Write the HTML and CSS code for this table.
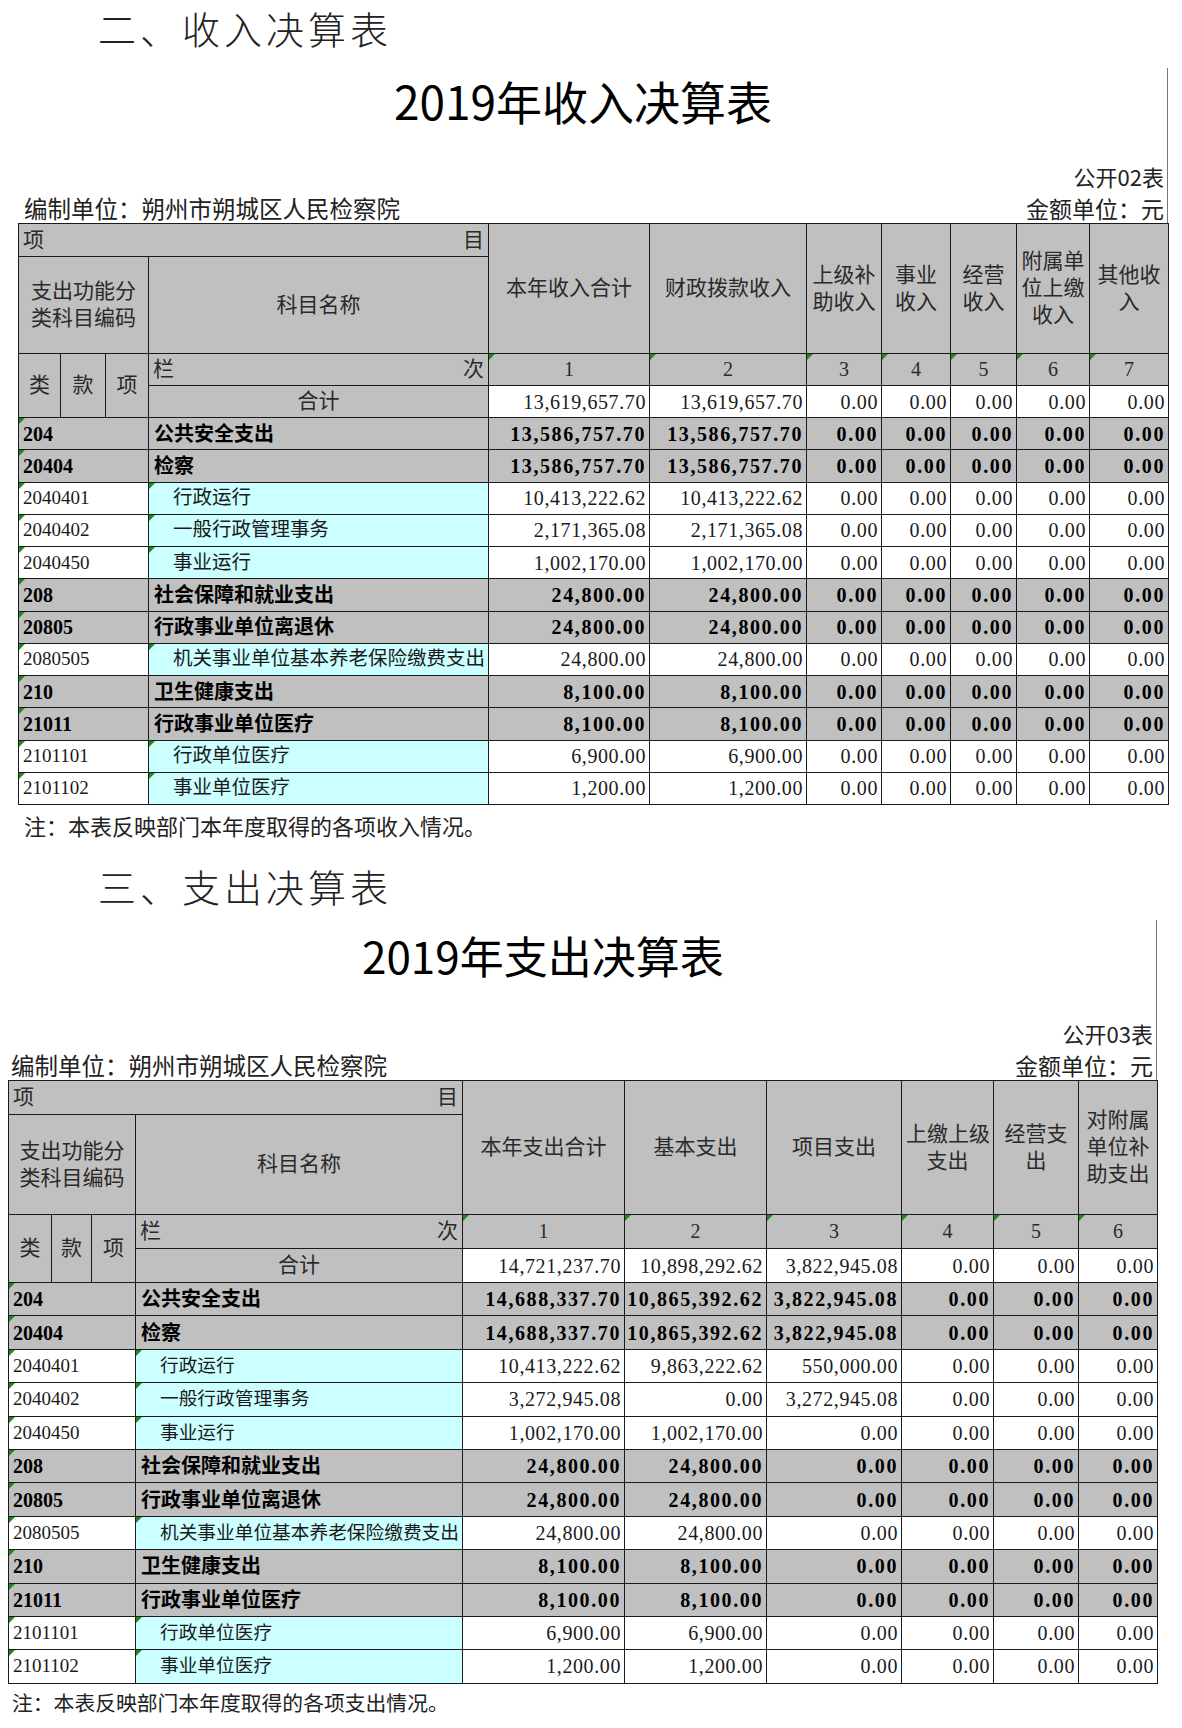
FILE: index.html
```html
<!DOCTYPE html>
<html lang="zh-CN">
<head>
<meta charset="utf-8">
<title>收入决算表 / 支出决算表</title>
<link rel="stylesheet" href="styles.css">
</head>
<body>

<section class="sheet sec-income">
  <h2 class="heading">二、收入决算表</h2>
  <div class="sheet-head">
    <h1 class="title">2019年收入决算表</h1>
    <div class="form-no">公开02表</div>
    <div class="meta"><span>编制单位：朔州市朔城区人民检察院</span><span>金额单位：元</span></div>
  </div>
  <table class="grid">
    <colgroup>
      <col class="w42"><col class="w45"><col class="w43"><col class="w340">
      <col class="w161"><col class="w157"><col class="w75"><col class="w69"><col class="w66"><col class="w73"><col class="w79">
    </colgroup>
    <tr class="r-top">
      <td colspan="4" class="hd lt"><div class="split"><span>项</span><span>目</span></div></td>
      <td rowspan="2" class="hd">本年收入合计</td>
      <td rowspan="2" class="hd">财政拨款收入</td>
      <td rowspan="2" class="hd">上级补<br>助收入</td>
      <td rowspan="2" class="hd">事业<br>收入</td>
      <td rowspan="2" class="hd">经营<br>收入</td>
      <td rowspan="2" class="hd">附属单<br>位上缴<br>收入</td>
      <td rowspan="2" class="hd">其他收<br>入</td>
    </tr>
    <tr class="r-head">
      <td colspan="3" class="hd">支出功能分<br>类科目编码</td>
      <td class="hd">科目名称</td>
    </tr>
    <tr class="r-num">
      <td rowspan="2" class="hd">类</td>
      <td rowspan="2" class="hd">款</td>
      <td rowspan="2" class="hd">项</td>
      <td class="hd lt"><div class="split"><span>栏</span><span>次</span></div></td>
      <td class="hd idx tri">1</td><td class="hd idx tri">2</td><td class="hd idx tri">3</td><td class="hd idx tri">4</td><td class="hd idx tri">5</td><td class="hd idx tri">6</td><td class="hd idx tri">7</td>
    </tr>
    <tr class="r-sum">
      <td class="hd">合计</td>
      <td class="num">13,619,657.70</td><td class="num">13,619,657.70</td><td class="num">0.00</td><td class="num">0.00</td><td class="num">0.00</td><td class="num">0.00</td><td class="num">0.00</td>
    </tr>
    <tr class="row b">
      <td colspan="3" class="code tri">204</td><td class="name">公共安全支出</td>
      <td class="num">13,586,757.70</td><td class="num">13,586,757.70</td><td class="num">0.00</td><td class="num">0.00</td><td class="num">0.00</td><td class="num">0.00</td><td class="num">0.00</td>
    </tr>
    <tr class="row b">
      <td colspan="3" class="code tri">20404</td><td class="name">检察</td>
      <td class="num">13,586,757.70</td><td class="num">13,586,757.70</td><td class="num">0.00</td><td class="num">0.00</td><td class="num">0.00</td><td class="num">0.00</td><td class="num">0.00</td>
    </tr>
    <tr class="row d">
      <td colspan="3" class="code tri">2040401</td><td class="name tri">行政运行</td>
      <td class="num">10,413,222.62</td><td class="num">10,413,222.62</td><td class="num">0.00</td><td class="num">0.00</td><td class="num">0.00</td><td class="num">0.00</td><td class="num">0.00</td>
    </tr>
    <tr class="row d">
      <td colspan="3" class="code tri">2040402</td><td class="name tri">一般行政管理事务</td>
      <td class="num">2,171,365.08</td><td class="num">2,171,365.08</td><td class="num">0.00</td><td class="num">0.00</td><td class="num">0.00</td><td class="num">0.00</td><td class="num">0.00</td>
    </tr>
    <tr class="row d">
      <td colspan="3" class="code tri">2040450</td><td class="name tri">事业运行</td>
      <td class="num">1,002,170.00</td><td class="num">1,002,170.00</td><td class="num">0.00</td><td class="num">0.00</td><td class="num">0.00</td><td class="num">0.00</td><td class="num">0.00</td>
    </tr>
    <tr class="row b">
      <td colspan="3" class="code tri">208</td><td class="name">社会保障和就业支出</td>
      <td class="num">24,800.00</td><td class="num">24,800.00</td><td class="num">0.00</td><td class="num">0.00</td><td class="num">0.00</td><td class="num">0.00</td><td class="num">0.00</td>
    </tr>
    <tr class="row b">
      <td colspan="3" class="code tri">20805</td><td class="name">行政事业单位离退休</td>
      <td class="num">24,800.00</td><td class="num">24,800.00</td><td class="num">0.00</td><td class="num">0.00</td><td class="num">0.00</td><td class="num">0.00</td><td class="num">0.00</td>
    </tr>
    <tr class="row d">
      <td colspan="3" class="code tri">2080505</td><td class="name tri">机关事业单位基本养老保险缴费支出</td>
      <td class="num">24,800.00</td><td class="num">24,800.00</td><td class="num">0.00</td><td class="num">0.00</td><td class="num">0.00</td><td class="num">0.00</td><td class="num">0.00</td>
    </tr>
    <tr class="row b">
      <td colspan="3" class="code tri">210</td><td class="name">卫生健康支出</td>
      <td class="num">8,100.00</td><td class="num">8,100.00</td><td class="num">0.00</td><td class="num">0.00</td><td class="num">0.00</td><td class="num">0.00</td><td class="num">0.00</td>
    </tr>
    <tr class="row b">
      <td colspan="3" class="code tri">21011</td><td class="name">行政事业单位医疗</td>
      <td class="num">8,100.00</td><td class="num">8,100.00</td><td class="num">0.00</td><td class="num">0.00</td><td class="num">0.00</td><td class="num">0.00</td><td class="num">0.00</td>
    </tr>
    <tr class="row d">
      <td colspan="3" class="code tri">2101101</td><td class="name tri">行政单位医疗</td>
      <td class="num">6,900.00</td><td class="num">6,900.00</td><td class="num">0.00</td><td class="num">0.00</td><td class="num">0.00</td><td class="num">0.00</td><td class="num">0.00</td>
    </tr>
    <tr class="row d">
      <td colspan="3" class="code tri">2101102</td><td class="name tri">事业单位医疗</td>
      <td class="num">1,200.00</td><td class="num">1,200.00</td><td class="num">0.00</td><td class="num">0.00</td><td class="num">0.00</td><td class="num">0.00</td><td class="num">0.00</td>
    </tr>
  </table>
  <p class="note">注：本表反映部门本年度取得的各项收入情况。</p>
</section>

<section class="sheet sec-expense">
  <h2 class="heading">三、支出决算表</h2>
  <div class="sheet-head">
    <h1 class="title">2019年支出决算表</h1>
    <div class="form-no">公开03表</div>
    <div class="meta"><span>编制单位：朔州市朔城区人民检察院</span><span>金额单位：元</span></div>
  </div>
  <table class="grid">
    <colgroup>
      <col class="w43"><col class="w40"><col class="w44"><col class="w327">
      <col class="w162"><col class="w142"><col class="w135"><col class="w92"><col class="w85"><col class="w79">
    </colgroup>
    <tr class="r-top">
      <td colspan="4" class="hd lt"><div class="split"><span>项</span><span>目</span></div></td>
      <td rowspan="2" class="hd">本年支出合计</td>
      <td rowspan="2" class="hd">基本支出</td>
      <td rowspan="2" class="hd">项目支出</td>
      <td rowspan="2" class="hd">上缴上级<br>支出</td>
      <td rowspan="2" class="hd">经营支<br>出</td>
      <td rowspan="2" class="hd">对附属<br>单位补<br>助支出</td>
    </tr>
    <tr class="r-head">
      <td colspan="3" class="hd">支出功能分<br>类科目编码</td>
      <td class="hd">科目名称</td>
    </tr>
    <tr class="r-num">
      <td rowspan="2" class="hd">类</td>
      <td rowspan="2" class="hd">款</td>
      <td rowspan="2" class="hd">项</td>
      <td class="hd lt"><div class="split"><span>栏</span><span>次</span></div></td>
      <td class="hd idx tri">1</td><td class="hd idx tri">2</td><td class="hd idx tri">3</td><td class="hd idx tri">4</td><td class="hd idx tri">5</td><td class="hd idx tri">6</td>
    </tr>
    <tr class="r-sum">
      <td class="hd">合计</td>
      <td class="num">14,721,237.70</td><td class="num">10,898,292.62</td><td class="num">3,822,945.08</td><td class="num">0.00</td><td class="num">0.00</td><td class="num">0.00</td>
    </tr>
    <tr class="row b">
      <td colspan="3" class="code tri">204</td><td class="name">公共安全支出</td>
      <td class="num">14,688,337.70</td><td class="num">10,865,392.62</td><td class="num">3,822,945.08</td><td class="num">0.00</td><td class="num">0.00</td><td class="num">0.00</td>
    </tr>
    <tr class="row b">
      <td colspan="3" class="code tri">20404</td><td class="name">检察</td>
      <td class="num">14,688,337.70</td><td class="num">10,865,392.62</td><td class="num">3,822,945.08</td><td class="num">0.00</td><td class="num">0.00</td><td class="num">0.00</td>
    </tr>
    <tr class="row d">
      <td colspan="3" class="code tri">2040401</td><td class="name tri">行政运行</td>
      <td class="num">10,413,222.62</td><td class="num">9,863,222.62</td><td class="num">550,000.00</td><td class="num">0.00</td><td class="num">0.00</td><td class="num">0.00</td>
    </tr>
    <tr class="row d">
      <td colspan="3" class="code tri">2040402</td><td class="name tri">一般行政管理事务</td>
      <td class="num">3,272,945.08</td><td class="num">0.00</td><td class="num">3,272,945.08</td><td class="num">0.00</td><td class="num">0.00</td><td class="num">0.00</td>
    </tr>
    <tr class="row d">
      <td colspan="3" class="code tri">2040450</td><td class="name tri">事业运行</td>
      <td class="num">1,002,170.00</td><td class="num">1,002,170.00</td><td class="num">0.00</td><td class="num">0.00</td><td class="num">0.00</td><td class="num">0.00</td>
    </tr>
    <tr class="row b">
      <td colspan="3" class="code tri">208</td><td class="name">社会保障和就业支出</td>
      <td class="num">24,800.00</td><td class="num">24,800.00</td><td class="num">0.00</td><td class="num">0.00</td><td class="num">0.00</td><td class="num">0.00</td>
    </tr>
    <tr class="row b">
      <td colspan="3" class="code tri">20805</td><td class="name">行政事业单位离退休</td>
      <td class="num">24,800.00</td><td class="num">24,800.00</td><td class="num">0.00</td><td class="num">0.00</td><td class="num">0.00</td><td class="num">0.00</td>
    </tr>
    <tr class="row d">
      <td colspan="3" class="code tri">2080505</td><td class="name tri">机关事业单位基本养老保险缴费支出</td>
      <td class="num">24,800.00</td><td class="num">24,800.00</td><td class="num">0.00</td><td class="num">0.00</td><td class="num">0.00</td><td class="num">0.00</td>
    </tr>
    <tr class="row b">
      <td colspan="3" class="code tri">210</td><td class="name">卫生健康支出</td>
      <td class="num">8,100.00</td><td class="num">8,100.00</td><td class="num">0.00</td><td class="num">0.00</td><td class="num">0.00</td><td class="num">0.00</td>
    </tr>
    <tr class="row b">
      <td colspan="3" class="code tri">21011</td><td class="name">行政事业单位医疗</td>
      <td class="num">8,100.00</td><td class="num">8,100.00</td><td class="num">0.00</td><td class="num">0.00</td><td class="num">0.00</td><td class="num">0.00</td>
    </tr>
    <tr class="row d">
      <td colspan="3" class="code tri">2101101</td><td class="name tri">行政单位医疗</td>
      <td class="num">6,900.00</td><td class="num">6,900.00</td><td class="num">0.00</td><td class="num">0.00</td><td class="num">0.00</td><td class="num">0.00</td>
    </tr>
    <tr class="row d">
      <td colspan="3" class="code tri">2101102</td><td class="name tri">事业单位医疗</td>
      <td class="num">1,200.00</td><td class="num">1,200.00</td><td class="num">0.00</td><td class="num">0.00</td><td class="num">0.00</td><td class="num">0.00</td>
    </tr>
  </table>
  <p class="note">注：本表反映部门本年度取得的各项支出情况。</p>
</section>

</body>
</html>
```

FILE: styles.css
```css
* { box-sizing: border-box; }

body {
  margin: 0;
  width: 1182px;
  background: #fff;
  color: #111;
  font-family: "Noto Sans CJK SC", "Noto Sans", sans-serif;
}

.sec-income { margin-left: 18px; width: 1150px; }
.sec-expense { margin-left: 8px; width: 1149px; }

.heading {
  margin: 0;
  font-size: 38px;
  line-height: 56px;
  font-weight: 300;
  letter-spacing: 4px;
  color: #222;
}
.sec-income .heading { padding-left: 80px; }
.sec-expense .heading { padding-left: 90px; margin-top: 18px; }

.sheet-head { border-right: 1px solid #777; }
.sec-income .sheet-head { margin-top: 12px; padding-top: 4px; }
.sec-expense .sheet-head { margin-top: 6px; padding-top: 7px; }

.title {
  margin: 0;
  font-size: 46px;
  line-height: 56px;
  font-weight: 400;
  color: #000;
}
.sec-income .title { padding-left: 376px; }
.sec-expense .title { padding-left: 354px; font-size: 44px; }

.form-no {
  text-align: right;
  font-size: 22px;
  line-height: 30px;
  padding-right: 3px;
  color: #222;
}
.sec-income .form-no { margin-top: 33px; }
.sec-expense .form-no { margin-top: 35px; }

.meta {
  display: flex;
  justify-content: space-between;
  align-items: baseline;
  font-size: 23.5px;
  line-height: 30px;
  margin-top: 2px;
  padding-right: 3px;
  color: #222;
}
.meta span:last-child { font-size: 23px; }
.sec-income .meta { padding-left: 6px; }
.sec-expense .meta { padding-left: 3px; }

/* table */
.grid {
  width: 100%;
  border-collapse: collapse;
  table-layout: fixed;
  font-family: "Liberation Serif", "Noto Sans CJK SC", serif;
  font-size: 19px;
  color: #1a1a1a;
}
.grid td {
  border: 1px solid #1a1a1a;
  padding: 0 4px;
  white-space: nowrap;
  position: relative;
  line-height: 24px;
}

.w40 { width: 40px; } .w42 { width: 42px; } .w43 { width: 43px; } .w44 { width: 44px; } .w45 { width: 45px; }
.w66 { width: 66px; } .w69 { width: 69px; } .w73 { width: 73px; } .w75 { width: 75px; } .w79 { width: 79px; }
.w85 { width: 85px; } .w92 { width: 92px; } .w135 { width: 135px; } .w142 { width: 142px; }
.w157 { width: 157px; } .w161 { width: 161px; } .w162 { width: 162px; }
.w327 { width: 327px; } .w340 { width: 340px; }

.sec-income .r-top { height: 33px; }
.sec-income .r-head { height: 97px; }
.sec-income .r-num, .sec-income .r-sum { height: 32px; }
.sec-income .row { height: 32.25px; }

.sec-expense .r-top { height: 34px; }
.sec-expense .r-head { height: 100px; }
.sec-expense .r-num, .sec-expense .r-sum { height: 34px; }
.sec-expense .row { height: 33.4px; }

.grid .hd {
  background: #c0c0c0;
  text-align: center;
  vertical-align: middle;
  font-size: 21px;
  line-height: 27px;
  color: #2a2a2a;
  white-space: nowrap;
}
.grid .hd.lt { text-align: left; }
.grid .hd.idx { font-size: 20px; }

.split {
  display: flex;
  justify-content: space-between;
  align-items: center;
}

.grid .num {
  text-align: right;
  font-size: 20px;
  letter-spacing: 0.6px;
  padding: 0 3px 0 2px;
  background: #fff;
}
.grid .code { text-align: left; background: #fff; }
.grid .name { text-align: left; padding-left: 5px; background: #fff; }

.row.b td { background: #c0c0c0; font-weight: 700; color: #000; }
.row.b .num { letter-spacing: 1.6px; }
.row.b .code { font-size: 20px; }
.row.b .name { font-size: 20px; }

.row.d .name { background: #ccffff; padding-left: 24px; font-size: 19.5px; }
.sec-expense .row.d .name { font-size: 18.7px; }

/* excel green error markers */
.tri::before {
  content: "";
  position: absolute;
  left: 0;
  top: 0;
  border-top: 6px solid #1e8a1e;
  border-right: 6px solid transparent;
}

.note {
  margin: 5px 0 0;
  font-size: 22px;
  line-height: 30px;
  color: #222;
}
.sec-income .note { padding-left: 6px; }
.sec-expense .note { margin-top: 3px; padding-left: 4px; font-size: 20.8px; }
```
